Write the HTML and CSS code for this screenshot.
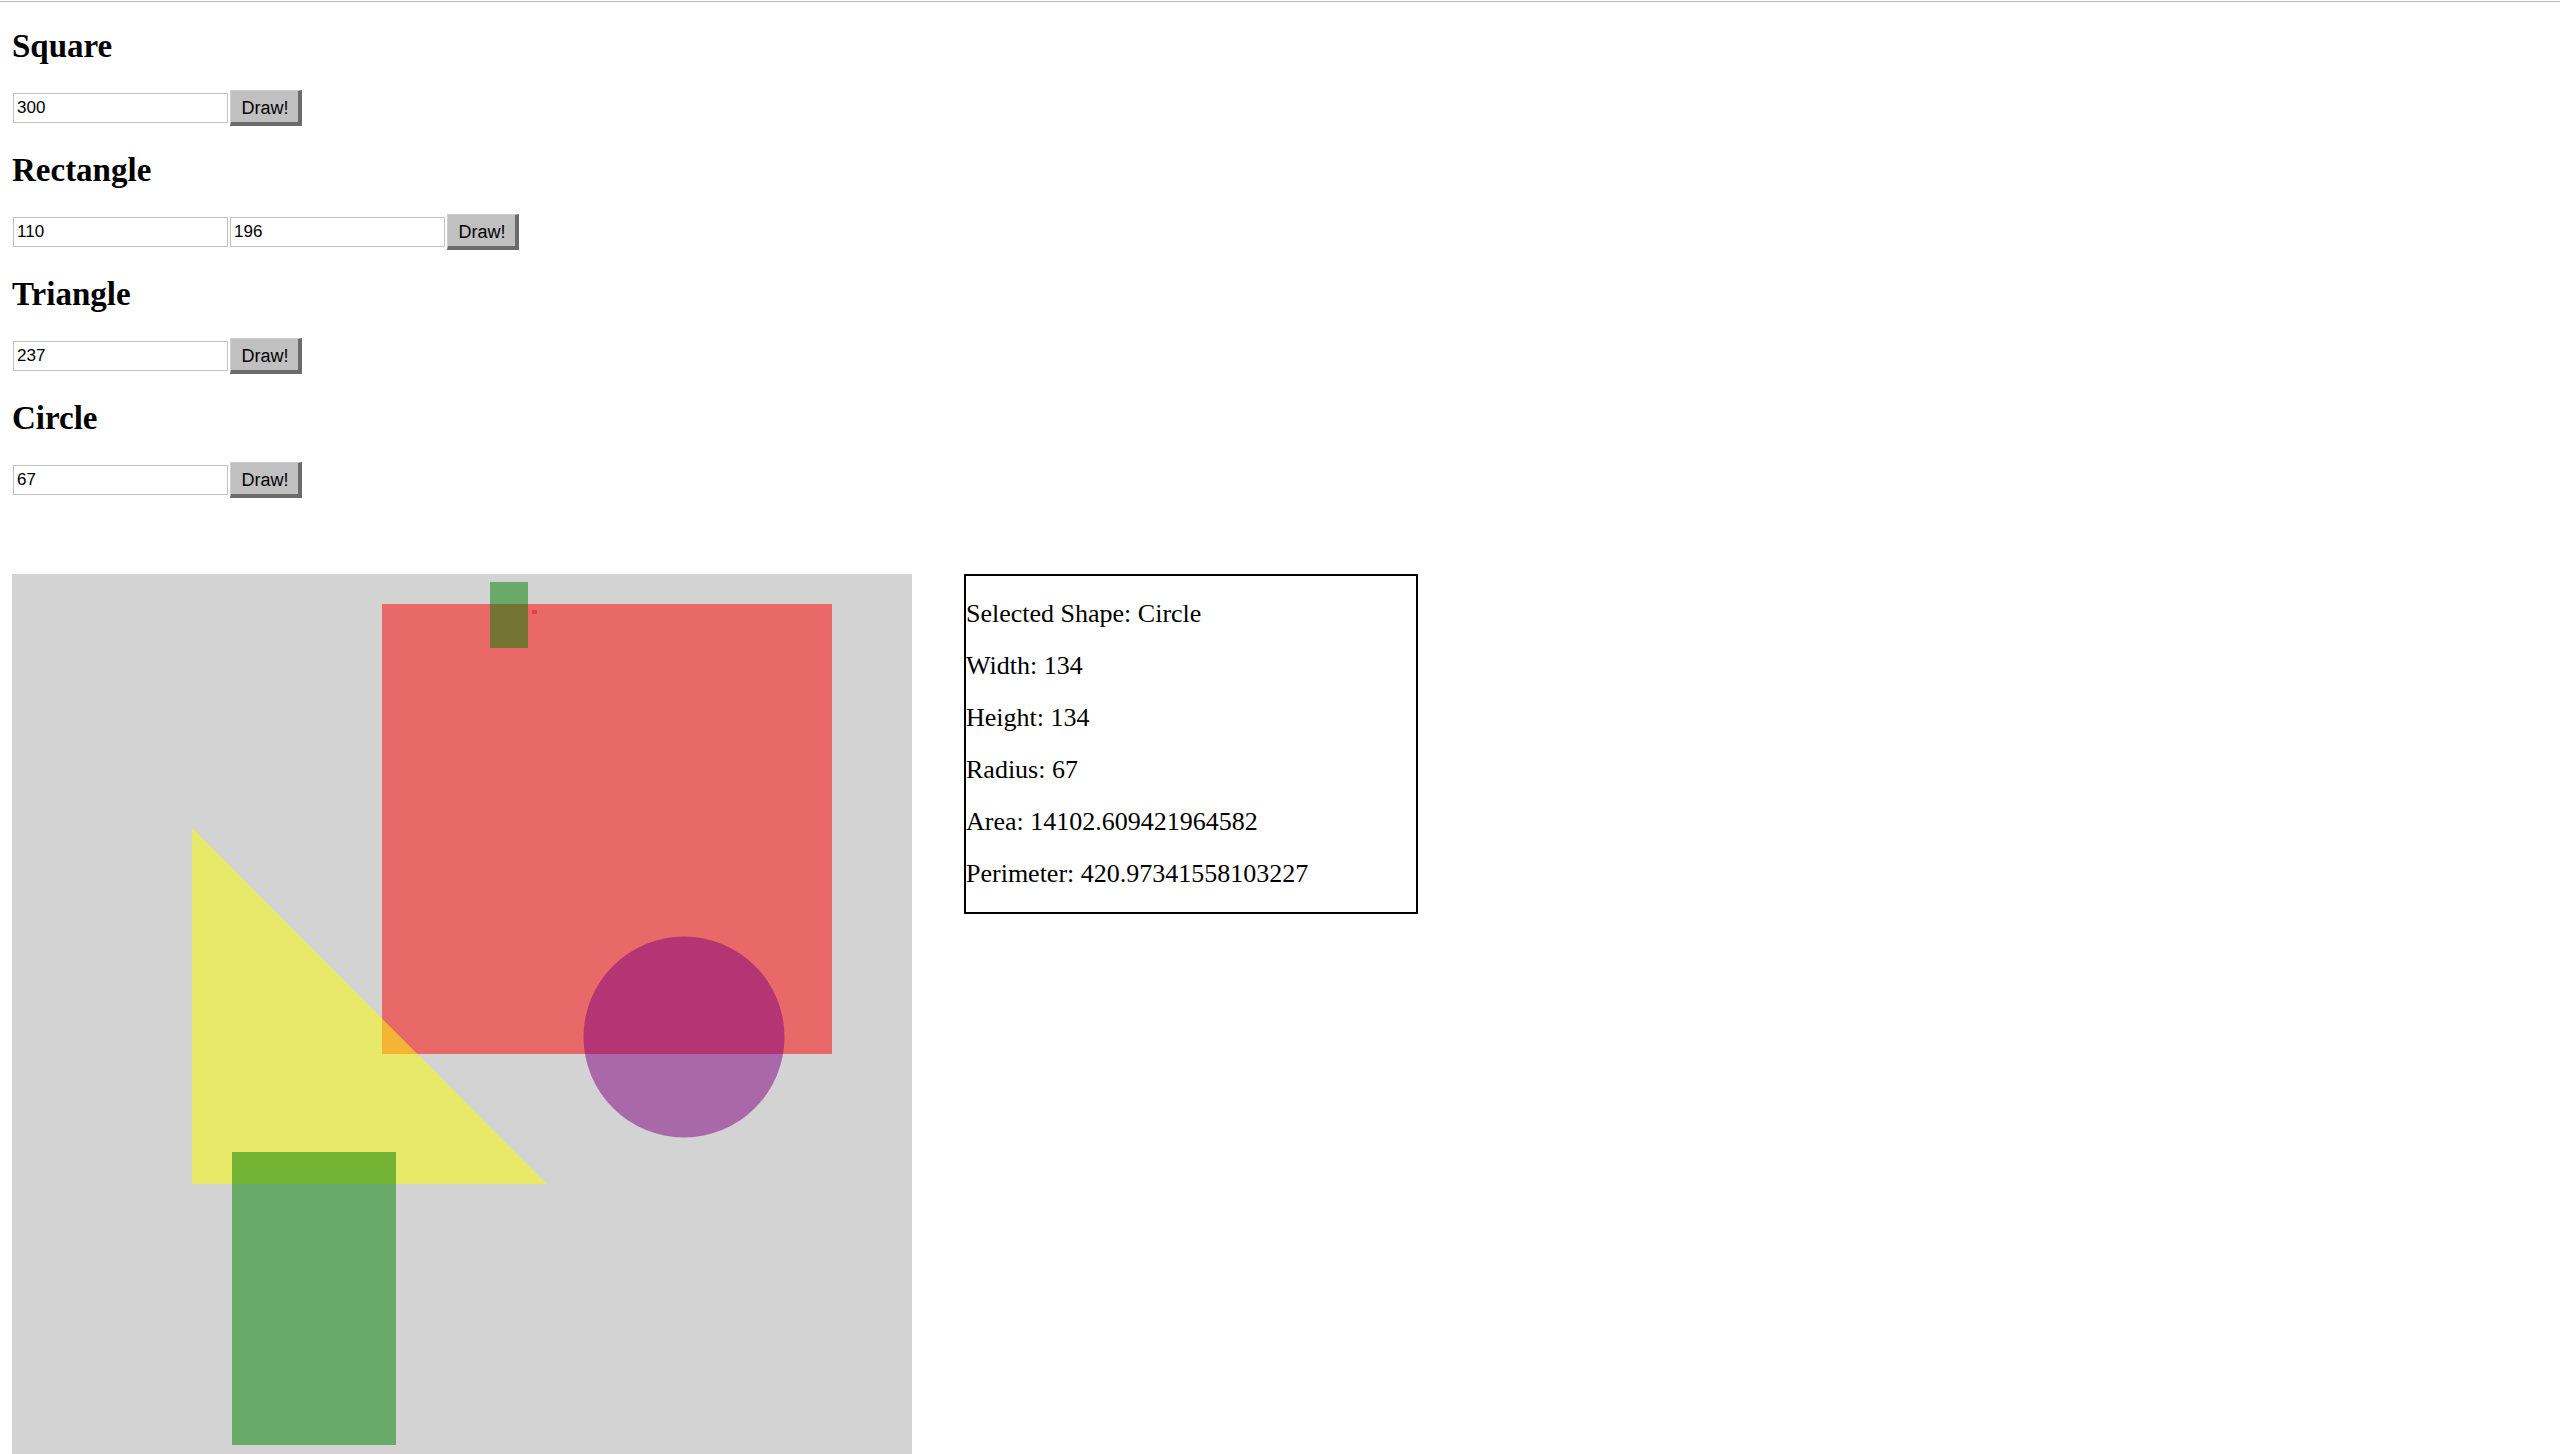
FILE: index.html
```html
<!DOCTYPE html>
<html>
<head>
<meta charset="utf-8">
<title>Shapes</title>
<link rel="stylesheet" href="styles.css">
</head>
<body>
<div class="topline"></div>
<div class="page">
  <section class="shape-form">
    <h3 class="shape-title">Square</h3>
    <div class="row">
      <input class="num" type="text" value="300">
      <button class="draw">Draw!</button>
    </div>
  </section>
  <section class="shape-form">
    <h3 class="shape-title">Rectangle</h3>
    <div class="row">
      <input class="num" type="text" value="110">
      <input class="num" type="text" value="196">
      <button class="draw">Draw!</button>
    </div>
  </section>
  <section class="shape-form">
    <h3 class="shape-title">Triangle</h3>
    <div class="row">
      <input class="num" type="text" value="237">
      <button class="draw">Draw!</button>
    </div>
  </section>
  <section class="shape-form">
    <h3 class="shape-title">Circle</h3>
    <div class="row">
      <input class="num" type="text" value="67">
      <button class="draw">Draw!</button>
    </div>
  </section>

  <div class="stage">
    <svg class="canvas" width="900" height="900" viewBox="0 0 900 900" xmlns="http://www.w3.org/2000/svg">
      <rect x="0" y="0" width="900" height="900" fill="#d3d3d3"/>
      <rect x="370" y="30" width="450" height="450" fill="rgb(255,0,0)" fill-opacity="0.5"/>
      <polygon points="180,254 180,610 535,610" fill="rgb(255,255,0)" fill-opacity="0.5"/>
      <rect x="478" y="8" width="38" height="66" fill="rgb(0,128,0)" fill-opacity="0.5"/>
      <rect x="220" y="578" width="164" height="293" fill="rgb(0,128,0)" fill-opacity="0.5"/>
      <circle cx="672" cy="463" r="100.5" fill="rgb(128,0,128)" fill-opacity="0.5"/>
      <rect x="520" y="36" width="5" height="4" fill="#f03c3c"/>
    </svg>
    <div class="info">
      <p class="info-line">Selected Shape: Circle</p>
      <p class="info-line">Width: 134</p>
      <p class="info-line">Height: 134</p>
      <p class="info-line">Radius: 67</p>
      <p class="info-line">Area: 14102.609421964582</p>
      <p class="info-line">Perimeter: 420.97341558103227</p>
    </div>
  </div>
</div>
</body>
</html>
```
FILE: styles.css
```css
html, body {
  margin: 0;
  padding: 0;
  background: #ffffff;
  overflow: hidden;
}

body {
  font-family: "Liberation Serif", "Times New Roman", serif;
  color: #000;
}

.topline {
  height: 1px;
  margin-top: 1px;
  background: #bdbdbd;
}

.page {
  padding: 0 12px;
}

.shape-title {
  margin: 28px 0 28px 0;
  font-family: "Liberation Serif", "Times New Roman", serif;
  font-weight: bold;
  font-size: 33px;
  line-height: 32px;
}

.row {
  display: flex;
  align-items: center;
  gap: 2px;
  height: 36px;
  padding-left: 1px;
}

.num {
  box-sizing: border-box;
  width: 215px;
  height: 30px;
  margin: 0;
  padding: 0 3px;
  border: 1px solid #c2c2c2;
  background: #fff;
  font-family: "Liberation Sans", Arial, sans-serif;
  font-size: 17px;
  color: #000;
  outline: none;
}

.draw {
  box-sizing: border-box;
  width: 72px;
  height: 36px;
  margin: 0;
  padding: 3px 0 0 1px;
  background: #c0c0c0;
  border-style: solid;
  border-width: 1px 4px 4px 1px;
  border-color: #cfcfcf #6b6b6b #6b6b6b #cfcfcf;
  font-family: "Liberation Sans", Arial, sans-serif;
  font-size: 18px;
  color: #000;
}

.stage {
  display: flex;
  align-items: flex-start;
  gap: 52px;
  margin-top: 76px;
}

.canvas {
  display: block;
  flex: none;
}

.info {
  box-sizing: border-box;
  width: 454px;
  border: 2px solid #000;
  padding: 0;
}

.info-line {
  margin: 24px 0;
  font-size: 26px;
  line-height: 28px;
}
```
